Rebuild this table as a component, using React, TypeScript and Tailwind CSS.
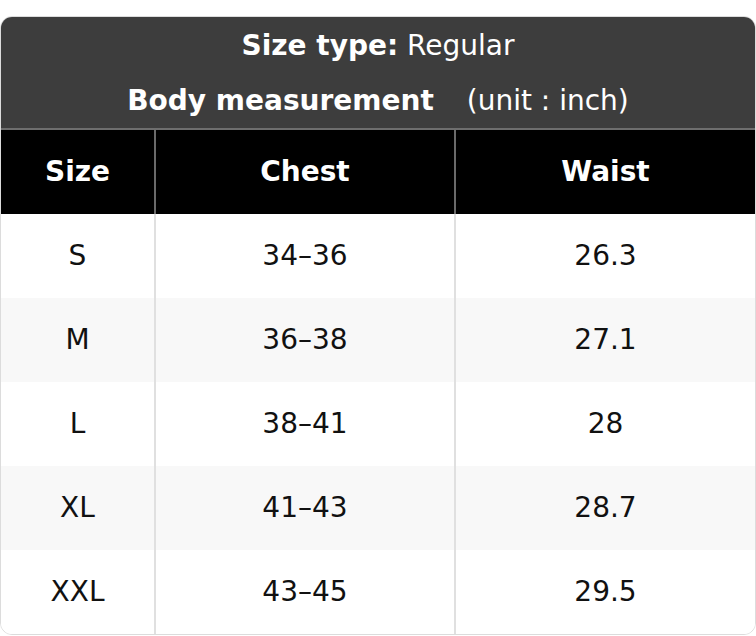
const rows = [
  { size: "S", chest: "34–36", waist: "26.3" },
  { size: "M", chest: "36–38", waist: "27.1" },
  { size: "L", chest: "38–41", waist: "28" },
  { size: "XL", chest: "41–43", waist: "28.7" },
  { size: "XXL", chest: "43–45", waist: "29.5" },
];

export default function App() {
  return (
    <div className="w-[756px] h-[636px] bg-white pt-4 font-['DejaVu_Sans',sans-serif] text-[28px]">
      <div className="rounded-xl border border-[#dcdcdc] overflow-hidden">
        {/* Title */}
        <div className="h-[113px] flex flex-col justify-center bg-[#3d3d3d] text-white text-center leading-[55px] border-b-2 border-[#6e6e6e]">
          <div>
            <span className="font-bold">Size type:</span> Regular
          </div>
          <div>
            <span className="font-bold">Body measurement</span>
            <span className="ml-[33px]">(unit : inch)</span>
          </div>
        </div>

        {/* Column headers */}
        <div className="grid grid-cols-[155px_300px_1fr] h-[84px] bg-black text-white font-bold">
          <div className="flex items-center justify-center border-r-2 border-[#6a6a6a]">Size</div>
          <div className="flex items-center justify-center border-r-2 border-[#6a6a6a]">Chest</div>
          <div className="flex items-center justify-center">Waist</div>
        </div>

        {/* Rows */}
        {rows.map((r, i) => (
          <div
            key={r.size}
            className={`grid grid-cols-[155px_300px_1fr] h-[84px] text-[#111] ${i % 2 === 1 ? "bg-[#f8f8f8]" : "bg-white"}`}
          >
            <div className="flex items-center justify-center border-r-2 border-[#e0e0e0]">{r.size}</div>
            <div className="flex items-center justify-center border-r-2 border-[#e0e0e0]">{r.chest}</div>
            <div className="flex items-center justify-center">{r.waist}</div>
          </div>
        ))}
      </div>
    </div>
  );
}
